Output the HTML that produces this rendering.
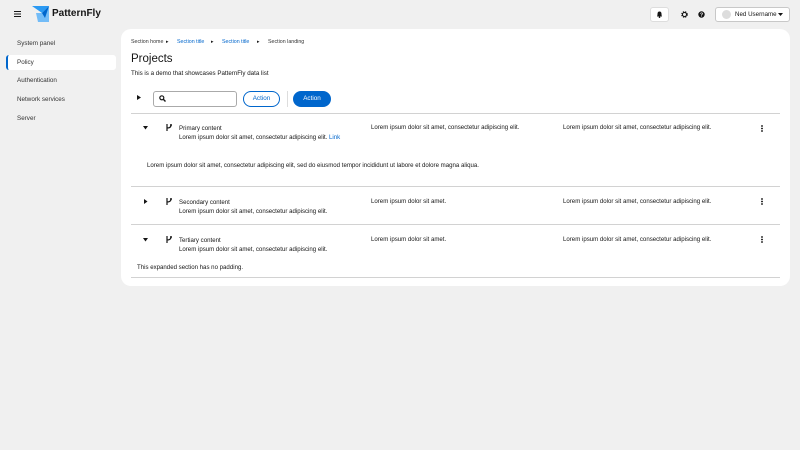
<!DOCTYPE html><html><head><meta charset="utf-8"><style>
*{box-sizing:border-box;margin:0;padding:0}
body{width:800px;height:450px;background:#f0f0f0;font-family:"Liberation Sans",sans-serif;color:#151515;font-size:6px;position:relative;overflow:hidden}
.a{position:absolute;white-space:nowrap}
.card{position:absolute;left:121px;top:29px;width:669px;height:257px;background:#fff;border-radius:10px}
.hr{position:absolute;left:131px;width:649px;height:1px;background:#d2d2d2}
.blue{color:#0066cc}
.nav{position:absolute;left:17px;font-size:6.3px;color:#333}
.t{font-size:6.1px}
</style></head><body>
<svg class="a" style="left:14px;top:11px" width="7" height="6"><path d="M0 .5H7M0 3H7M0 5.5H7" stroke="#151515" stroke-width="1"/></svg>
<svg class="a" style="left:32px;top:6px" width="17" height="16" viewBox="0 0 17 16"><path d="M0 0H17L10 7Z" fill="#2b9af3"/><path d="M4 7L10 7L17 0V16H6Z" fill="#73bcf7"/><path d="M10 7L17 0L13 12Z" fill="#0066cc"/></svg>
<div class="a" style="left:52px;top:8px;font-size:10px;font-weight:bold">PatternFly</div>
<div class="a" style="left:650px;top:7px;width:19px;height:15px;background:#fff;border:1px solid #ddd;border-radius:3px"></div>
<svg class="a" style="left:656px;top:11px" width="7" height="7" viewBox="0 0 7 7"><path d="M1 5.5Q1.5 4.5 1.5 3Q1.5 .5 3.5 .5Q5.5 .5 5.5 3Q5.5 4.5 6 5.5Z" fill="#151515"/><circle cx="3.5" cy="6.2" r=".8" fill="#151515"/></svg>
<svg class="a" style="left:681px;top:11px" width="7" height="7" viewBox="0 0 7 7"><circle cx="3.5" cy="3.5" r="2.5" fill="none" stroke="#151515" stroke-width="1.6" stroke-dasharray="1.2 .8"/><circle cx="3.5" cy="3.5" r="2" fill="none" stroke="#151515" stroke-width="1"/></svg>
<svg class="a" style="left:698px;top:11px" width="7" height="7" viewBox="0 0 7 7"><circle cx="3.5" cy="3.5" r="3.2" fill="#151515"/><text x="3.5" y="5.5" font-size="5" font-weight="bold" fill="#fff" text-anchor="middle" font-family="Liberation Sans">?</text></svg>
<div class="a" style="left:715px;top:7px;width:75px;height:15px;background:#fff;border:1px solid #c8c8c8;border-radius:3px"></div>
<div class="a" style="left:722px;top:10px;width:9px;height:9px;border-radius:50%;background:#ddd"></div>
<div class="a" style="left:735px;top:11px;font-size:6.2px">Ned Username</div>
<svg class="a" style="left:778px;top:13px" width="5" height="3"><path d="M0 0H5L2.5 3Z" fill="#151515"/></svg>
<div class="nav" style="top:40px">System panel</div>
<div class="a" style="left:6px;top:55px;width:110px;height:15px;background:#fff;border-radius:3px;border-left:2px solid #0066cc"></div>
<div class="nav" style="top:59px">Policy</div>
<div class="nav" style="top:77px">Authentication</div>
<div class="nav" style="top:96px">Network services</div>
<div class="nav" style="top:115px">Server</div>
<div class="card"></div>
<div class="a" style="left:131px;top:39px;font-size:5.3px;color:#333">Section home</div>
<div class="a" style="left:166px;top:39px;font-size:5px">▸</div>
<div class="a blue" style="left:177px;top:39px;font-size:5.3px">Section title</div>
<div class="a" style="left:211px;top:39px;font-size:5px">▸</div>
<div class="a blue" style="left:222px;top:39px;font-size:5.3px">Section title</div>
<div class="a" style="left:257px;top:39px;font-size:5px">▸</div>
<div class="a" style="left:268px;top:39px;font-size:5.3px;color:#333">Section landing</div>
<div class="a" style="left:131px;top:53px;font-size:11.5px">Projects</div>
<div class="a" style="left:131px;top:70px;font-size:6.2px">This is a demo that showcases PatternFly data list</div>
<svg class="a" style="left:137px;top:95px" width="4" height="5"><path d="M0 0L4 2.5L0 5Z" fill="#151515"/></svg>
<div class="a" style="left:153px;top:91px;width:84px;height:16px;border:1px solid #aaa;border-radius:3px"></div>
<svg class="a" style="left:159px;top:95px" width="7" height="7"><circle cx="2.8" cy="2.8" r="2" fill="none" stroke="#151515" stroke-width="1.2"/><path d="M4.3 4.3L6.5 6.5" stroke="#151515" stroke-width="1.4"/></svg>
<div class="a" style="left:243px;top:91px;width:37px;height:16px;border:1px solid #0066cc;border-radius:8px;color:#0066cc;font-size:6.3px;text-align:center;line-height:14px">Action</div>
<div class="a" style="left:287px;top:91px;width:1px;height:16px;background:#ddd"></div>
<div class="a" style="left:293px;top:91px;width:38px;height:16px;background:#0066cc;border-radius:8px;color:#fff;font-size:6.3px;text-align:center;line-height:16px">Action</div>
<div class="hr" style="top:113px"></div>
<div class="hr" style="top:186px"></div>
<div class="hr" style="top:224px"></div>
<div class="hr" style="top:277px"></div>

<svg class="a" style="left:143px;top:126px" width="5" height="4"><path d="M0 0H5L2.5 3.5Z" fill="#151515"/></svg>
<svg class="a" style="left:166px;top:124px" width="6" height="7"><path d="M1 0V7M1 4Q5 4 5 1" stroke="#151515" stroke-width="1.2" fill="none"/><circle cx="5" cy="1" r="1" fill="#151515"/></svg>
<div class="a t" style="left:179px;top:124px;line-height:9px">Primary content<br>Lorem ipsum dolor sit amet, consectetur adipiscing elit. <span class="blue">Link</span></div>
<div class="a t" style="left:371px;top:124px">Lorem ipsum dolor sit amet, consectetur adipiscing elit.</div>
<div class="a t" style="left:563px;top:124px">Lorem ipsum dolor sit amet, consectetur adipiscing elit.</div>
<svg class="a" style="left:761px;top:125px" width="2" height="7"><circle cx="1" cy="1" r=".9"/><circle cx="1" cy="3.5" r=".9"/><circle cx="1" cy="6" r=".9"/></svg>
<div class="a t" style="left:147px;top:162px">Lorem ipsum dolor sit amet, consectetur adipiscing elit, sed do eiusmod tempor incididunt ut labore et dolore magna aliqua.</div>

<svg class="a" style="left:144px;top:199px" width="4" height="5"><path d="M0 0L3.5 2.5L0 5Z" fill="#151515"/></svg>
<svg class="a" style="left:166px;top:198px" width="6" height="7"><path d="M1 0V7M1 4Q5 4 5 1" stroke="#151515" stroke-width="1.2" fill="none"/><circle cx="5" cy="1" r="1" fill="#151515"/></svg>
<div class="a t" style="left:179px;top:198px;line-height:9px">Secondary content<br>Lorem ipsum dolor sit amet, consectetur adipiscing elit.</div>
<div class="a t" style="left:371px;top:198px">Lorem ipsum dolor sit amet.</div>
<div class="a t" style="left:563px;top:198px">Lorem ipsum dolor sit amet, consectetur adipiscing elit.</div>
<svg class="a" style="left:761px;top:198px" width="2" height="7"><circle cx="1" cy="1" r=".9"/><circle cx="1" cy="3.5" r=".9"/><circle cx="1" cy="6" r=".9"/></svg>

<svg class="a" style="left:143px;top:238px" width="5" height="4"><path d="M0 0H5L2.5 3.5Z" fill="#151515"/></svg>
<svg class="a" style="left:166px;top:236px" width="6" height="7"><path d="M1 0V7M1 4Q5 4 5 1" stroke="#151515" stroke-width="1.2" fill="none"/><circle cx="5" cy="1" r="1" fill="#151515"/></svg>
<div class="a t" style="left:179px;top:236px;line-height:9px">Tertiary content<br>Lorem ipsum dolor sit amet, consectetur adipiscing elit.</div>
<div class="a t" style="left:371px;top:236px">Lorem ipsum dolor sit amet.</div>
<div class="a t" style="left:563px;top:236px">Lorem ipsum dolor sit amet, consectetur adipiscing elit.</div>
<svg class="a" style="left:761px;top:236px" width="2" height="7"><circle cx="1" cy="1" r=".9"/><circle cx="1" cy="3.5" r=".9"/><circle cx="1" cy="6" r=".9"/></svg>
<div class="a t" style="left:137px;top:264px">This expanded section has no padding.</div>
</body></html>
